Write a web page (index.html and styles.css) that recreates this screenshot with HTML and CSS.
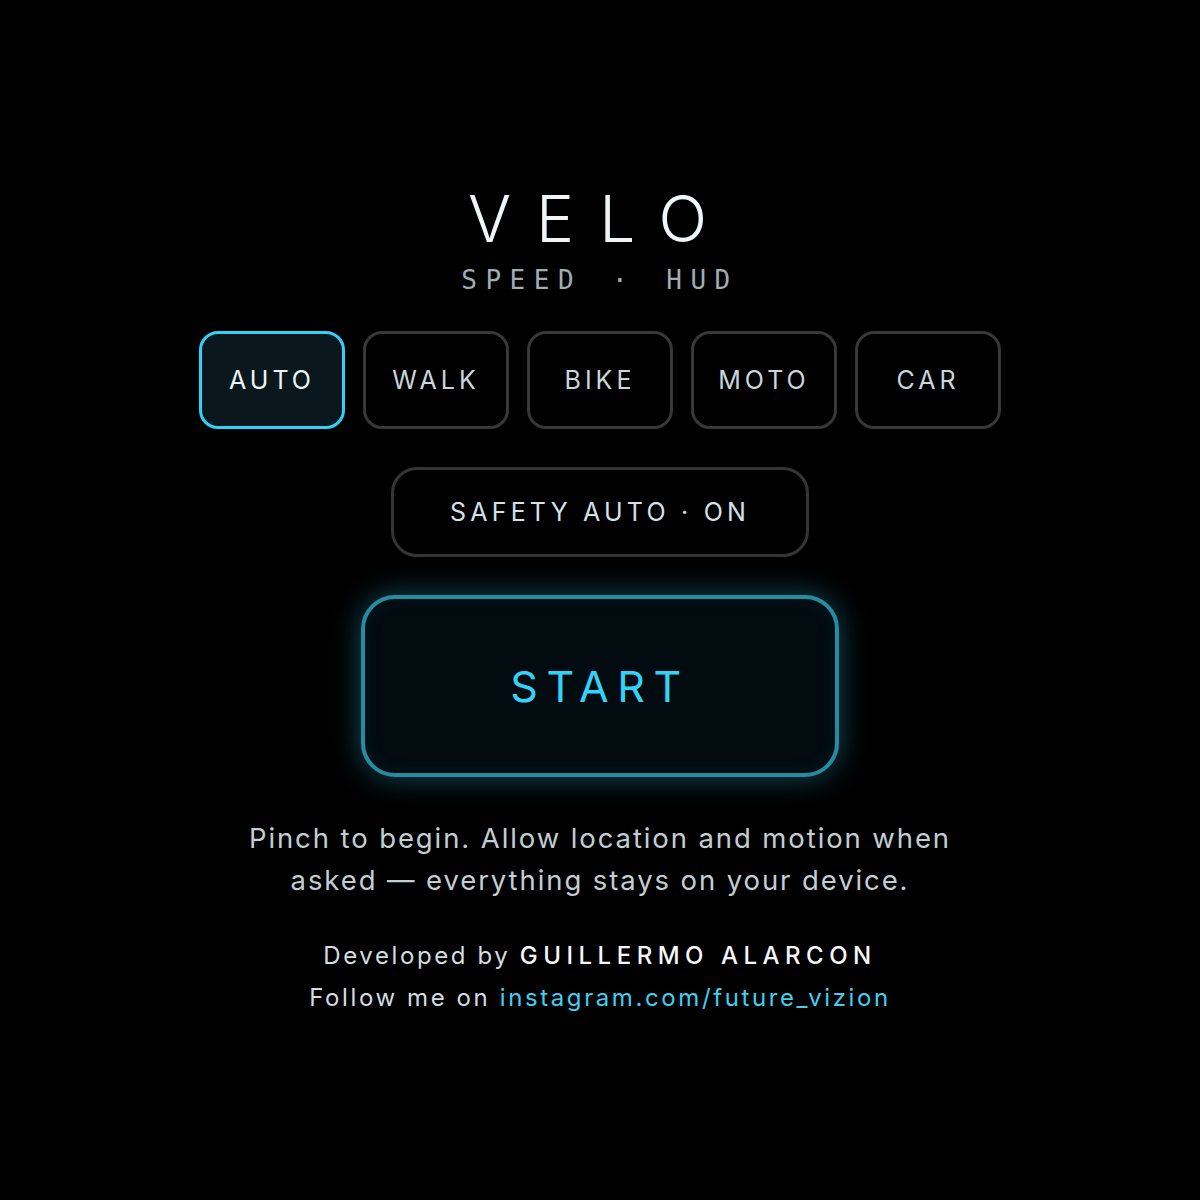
FILE: index.html
```html
<!DOCTYPE html>
<html>
<head>
<meta charset="utf-8">
<link rel="stylesheet" href="styles.css">
</head>
<body>
<main class="screen">
  <h1 class="logo">VELO</h1>
  <div class="tagline"><span>SPEED</span><span class="dot">·</span><span>HUD</span></div>
  <div class="modes">
    <button class="mode active">AUTO</button>
    <button class="mode">WALK</button>
    <button class="mode">BIKE</button>
    <button class="mode">MOTO</button>
    <button class="mode">CAR</button>
  </div>
  <button class="safety">SAFETY AUTO · ON</button>
  <button class="start">START</button>
  <p class="hint">Pinch to begin. Allow location and motion when asked — everything stays on your device.</p>
  <p class="credits">Developed by <strong>GUILLERMO ALARCON</strong><br>Follow me on <a href="#">instagram.com/future_vizion</a></p>
</main>
</body>
</html>
```
FILE: styles.css
```css
html, body {
  margin: 0;
  padding: 0;
  background: #000;
}
body {
  font-family: Inter, "Noto Sans", sans-serif;
  color: #c8d4d9;
}
.screen {
  width: 1200px;
  height: 1200px;
  display: flex;
  flex-direction: column;
  align-items: center;
  padding-top: 187px;
  box-sizing: border-box;
}
.logo {
  margin: 0;
  font-size: 64px;
  line-height: 64px;
  font-weight: 300;
  letter-spacing: 25px;
  color: #eef6f8;
}
.tagline {
  margin-top: 14px;
  display: flex;
  gap: 30px;
  font-family: "DejaVu Sans Mono", monospace;
  font-size: 26px;
  line-height: 30px;
  letter-spacing: 8.5px;
  color: #9eadb4;
}
.modes {
  margin-top: 36px;
  display: flex;
  gap: 18px;
}
button {
  font-family: Inter, "Noto Sans", sans-serif;
  cursor: pointer;
}
.mode {
  width: 146px;
  height: 98px;
  box-sizing: border-box;
  border: 3px solid #383838;
  border-radius: 19px;
  background: #000;
  color: #c9d6dc;
  font-size: 25px;
  font-weight: 400;
  letter-spacing: 4px;
  padding: 0;
}
.mode.active {
  border-color: #2fd2f7;
  background: #0a181d;
  color: #eaf4f7;
}
.safety {
  margin-top: 38px;
  width: 418px;
  height: 90px;
  box-sizing: border-box;
  border: 3px solid #353535;
  border-radius: 26px;
  background: #000;
  color: #d3e2e8;
  font-size: 25px;
  letter-spacing: 4.2px;
  padding: 0;
}
.start {
  margin-top: 38px;
  width: 478px;
  height: 182px;
  box-sizing: border-box;
  border: 4px solid #2a8aa0;
  border-radius: 34px;
  background: #020b0f;
  color: #33d2f6;
  font-size: 43px;
  font-weight: 400;
  letter-spacing: 8.5px;
  padding: 0;
  box-shadow: 0 0 30px rgba(40, 190, 230, 0.4), inset 0 0 18px rgba(40, 190, 230, 0.08);
}
.hint {
  margin: 40px 0 0;
  width: 760px;
  text-align: center;
  font-size: 27.5px;
  line-height: 42px;
  letter-spacing: 1.9px;
  color: #c2ced3;
}
.credits {
  margin: 34px 0 0;
  text-align: center;
  font-size: 24px;
  line-height: 42px;
  letter-spacing: 2.6px;
  color: #d3dde1;
}
.credits strong {
  font-weight: 500;
  color: #f4f8fa;
  letter-spacing: 5.5px;
}
.credits a {
  color: #3fd0f2;
  text-decoration: none;
}
```
